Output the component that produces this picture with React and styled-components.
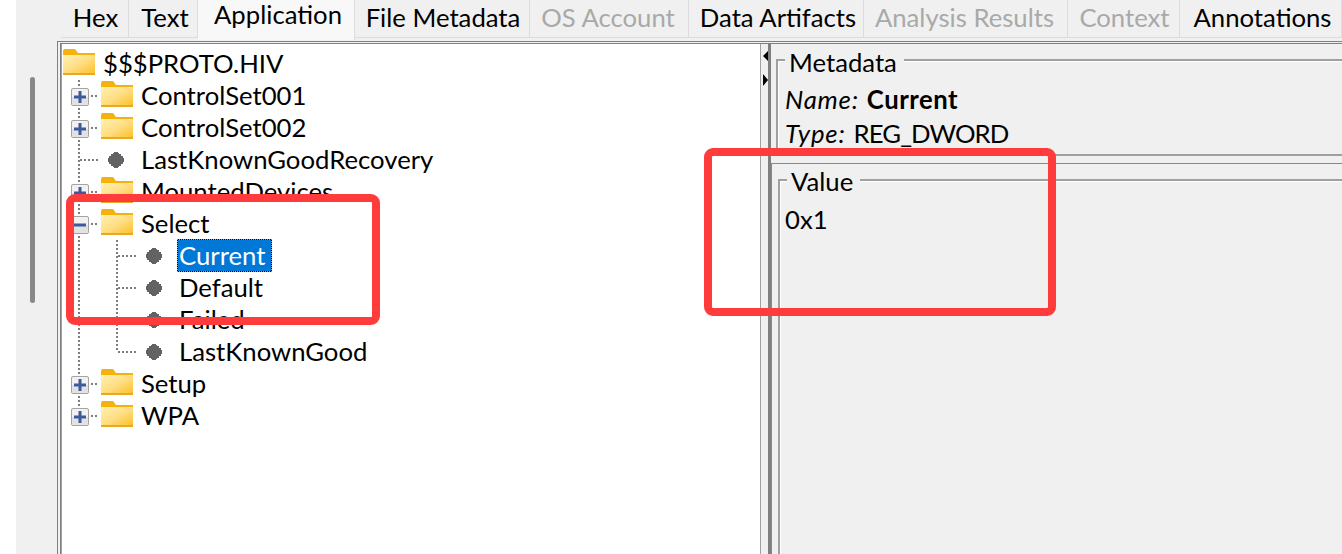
import React from "react";
import styled, { createGlobalStyle } from "styled-components";

const Global = createGlobalStyle`
  html, body { margin: 0; padding: 0; background: #fff; overflow: hidden; }
  body { font-family: Lato, "Open Sans", "Liberation Sans", sans-serif; color: #000; }
  * { box-sizing: border-box; }
`;

const Page = styled.div`
  position: relative; display: flex; width: 1342px; height: 554px; overflow: hidden; background: #fff;
  font-size: 25.7px;
`;
const Rail = styled.div`
  width: 41px; margin-left: 16px; flex: none; background: #f0f0f0; padding: 77px 0 0 14px;
`;
const Thumb = styled.div`
  width: 5px; height: 226px; background: #888; border-radius: 3px;
`;
const Main = styled.div`
  flex: 1; min-width: 0; display: flex; flex-direction: column; background: #f0f0f0;
`;
const TabStrip = styled.div`
  height: 41px; flex: none; display: flex; align-items: flex-start; padding-left: 4px;
`;
const Tab = styled.div`
  flex: none; width: ${p => p.$w}px; height: ${p => (p.$active ? 40 : 38)}px;
  display: flex; align-items: center; justify-content: center; white-space: nowrap;
  padding-bottom: ${p => (p.$active ? 13 : 3)}px;
  padding-left: ${p => Math.max(p.$n, 0) * 2}px;
  padding-right: ${p => Math.max(-p.$n, 0) * 2}px;
  background: ${p => (p.$active ? "#f8f8f8" : "#f0f0f0")};
  border-right: 1px solid #dcdcdc;
  border-bottom: ${p => (p.$active ? "none" : "1px solid #dcdcdc")};
  color: ${p => (p.$off ? "#a9a9a9" : "#000")};
`;
const Frame = styled.div`
  flex: 1; min-height: 0; border-top: 1px solid #808080; border-left: 1px solid #808080;
  padding: 1px 0 0 2px; display: flex;
`;
const Inner = styled.div`
  flex: 1; min-width: 0; display: flex; border-top: 1px solid #808080; border-left: 1px solid #808080;
`;
const TreePane = styled.div`
  width: 700px; flex: none; background: #fff; border-left: 1px solid #a0a0a0; border-right: 1px solid #a0a0a0;
  padding: 4px 0 0 1px; display: flex; flex-direction: column;
`;
const Row = styled.div`
  height: 32px; flex: none; display: flex; align-items: center;
`;
const Guides = styled.svg`
  flex: none; display: block;
`;
const FolderIcon = styled.svg`
  flex: none; display: block; margin-top: -4px;
`;
const BulletIcon = styled.svg`
  flex: none; display: block;
`;
const Label = styled.span`
  display: inline-flex; align-items: center; height: 31px; white-space: nowrap;
  padding: 0 ${p => (p.$selected ? 6 : 4)}px 2px 1px;
  margin-left: ${p => p.$gap}px; margin-top: -1px;
  ${p => p.$selected && `
    background: #0078d7; color: #fff;
    box-shadow: 0 0 0 1px #000; outline: 1px dotted #ff8c00;
  `}
`;
const Splitter = styled.div`
  width: 7px; flex: none; display: flex; flex-direction: column; padding: 7px 0 0 2px; gap: 13px;
`;
const Arrow = styled.svg`
  display: block; flex: none;
`;
const Details = styled.div`
  flex: 1; min-width: 0; display: flex; flex-direction: column; border-left: 3px solid #808080; overflow: hidden;
`;
const TopPane = styled.div`
  height: 112px; flex: none; padding-left: 5px; margin-right: -12px;
`;
const BottomPane = styled.div`
  flex: 1; margin-top: 7px; border-top: 1px solid #888; border-left: 1px solid #888;
  padding-left: 6px; margin-right: -12px;
`;
const Group = styled.fieldset`
  margin: 0; padding: 0 0 0 ${p => p.$pad}px; min-width: 0; height: ${p => p.$h};
  border: 2px solid #a0a0a0; box-shadow: inset 1px 1px 0 #fff;
`;
const Legend = styled.legend`
  margin-left: ${p => p.$m}px; padding: ${p => p.$drop}px 7px 0 ${p => p.$left}px;
  line-height: ${p => 32 - p.$drop}px; background: #f0f0f0;
`;
const MetaLine = styled.div`
  height: 34px; line-height: 32px; white-space: nowrap;
  &:first-of-type { margin-top: 7px; }
`;
const Key = styled.i`
  font-style: italic; margin-right: 8px; letter-spacing: .8px;
`;
const Strong = styled.b`
  font-weight: 700; letter-spacing: .5px;
`;
const TypeName = styled.span`
  letter-spacing: -.9px;
`;
const Mark = styled.div`
  position: absolute; border: 8px solid #ff3b3b; border-radius: 9px; pointer-events: none;
  left: ${p => p.$x}px; top: ${p => p.$y}px; width: ${p => p.$w}px; height: ${p => p.$h}px;
`;

const Dot = ({ d }) => (
  <path d={d} fill="none" stroke="#7c7c7c" strokeWidth="2" strokeDasharray="2 2" />
);

const Folder = () => (
  <FolderIcon width="32" height="26" viewBox="0 0 32 26">
    <defs>
      <linearGradient id="fold" x1="0" y1="0" x2="1" y2="1">
        <stop offset="0" stopColor="#fff0b5" />
        <stop offset=".5" stopColor="#ffdf85" />
        <stop offset="1" stopColor="#fcc02c" />
      </linearGradient>
    </defs>
    <path d="M0 2 L1 0 H12 L15 4 H32 V7 H0 Z" fill="#f4b20a" />
    <rect x="0" y="6" width="32" height="18" fill="url(#fold)" />
    <rect x="0" y="24" width="32" height="2" fill="#e6a921" />
  </FolderIcon>
);

const Bullet = () => (
  <BulletIcon width="16" height="16" viewBox="0 0 16 16">
    <path d="M5 1 H6 V0 H10 V1 H11 V2 H13 V4 H15 V6 H16 V10 H15 V12 H13 V14 H11 V15 H10 V16 H6 V15 H5 V14 H3 V12 H1 V10 H0 V6 H1 V4 H3 V2 H5 Z" fill="#636363" />
  </BulletIcon>
);

const Toggle = ({ open }) => (
  <g>
    <rect x="8.5" y="8.5" width="17" height="17" rx="1.5" fill="#f1f1f1" stroke="#a3a3a3" />
    <rect x="9" y="17" width="16" height="8" fill="#e2e2e2" />
    <rect x="11" y="15.5" width="12" height="3" fill="#3c5a9c" />
    {!open && <rect x="15.5" y="11" width="3" height="12" fill="#3c5a9c" />}
  </g>
);

const Branch = ({ toggle, open, last }) => (
  <Guides width="38" height="32" viewBox="0 0 38 32">
    <Dot d={`M16 0 V${last ? 8 : 32}`} />
    {toggle ? <Dot d="M28 16 H35" /> : <Dot d="M16 16 H35" />}
    {toggle && <Toggle open={open} />}
  </Guides>
);

const LeafOne = () => (
  <Guides width="45" height="32" viewBox="0 0 45 32">
    <Dot d="M16 0 V32" />
    <Dot d="M17 16 H36" />
  </Guides>
);

const LeafTwo = ({ last }) => (
  <Guides width="83" height="32" viewBox="0 0 83 32">
    <Dot d="M16 0 V32" />
    <Dot d={`M54 0 V${last ? 15 : 32}`} />
    <Dot d="M55 16 H74" />
  </Guides>
);

const tabs = [
  ["Hex", 68, 1], ["Text", 69, 2], ["Application", 157, 2, "active"], ["File Metadata", 175, 1],
  ["OS Account", 159, -1, "off"], ["Data Artifacts", 175, 2], ["Analysis Results", 204, -1, "off"],
  ["Context", 112, 1, "off"], ["Annotations", 162, 2],
];

export default function App() {
  return (
    <Page>
      <Global />
      <Rail><Thumb /></Rail>
      <Main>
        <TabStrip>
          {tabs.map(([name, w, n, s]) => (
            <Tab key={name} $w={w} $n={n} $active={s === "active"} $off={s === "off"}>{name}</Tab>
          ))}
        </TabStrip>
        <Frame>
          <Inner>
            <TreePane>
              <Row><Folder /><Label $gap={7}>$$$PROTO.HIV</Label></Row>
              <Row><Branch toggle /><Folder /><Label $gap={7}>ControlSet001</Label></Row>
              <Row><Branch toggle /><Folder /><Label $gap={7}>ControlSet002</Label></Row>
              <Row><LeafOne /><Bullet /><Label $gap={16}>LastKnownGoodRecovery</Label></Row>
              <Row><Branch toggle /><Folder /><Label $gap={7}>MountedDevices</Label></Row>
              <Row><Branch toggle open /><Folder /><Label $gap={7}>Select</Label></Row>
              <Row><LeafTwo /><Bullet /><Label $gap={16} $selected>Current</Label></Row>
              <Row><LeafTwo /><Bullet /><Label $gap={16}>Default</Label></Row>
              <Row><LeafTwo /><Bullet /><Label $gap={16}>Failed</Label></Row>
              <Row><LeafTwo last /><Bullet /><Label $gap={16}>LastKnownGood</Label></Row>
              <Row><Branch toggle /><Folder /><Label $gap={7}>Setup</Label></Row>
              <Row><Branch toggle last /><Folder /><Label $gap={7}>WPA</Label></Row>
            </TreePane>
            <Splitter>
              <Arrow width="5" height="10" viewBox="0 0 5 10"><path d="M5 0 V10 L0 5 Z" fill="#000" /></Arrow>
              <Arrow width="5" height="12" viewBox="0 0 5 12"><path d="M0 0 V12 L5 6 Z" fill="#000" /></Arrow>
            </Splitter>
            <Details>
              <TopPane>
                <Group $pad={7} $h="112px">
                  <Legend $m={0} $left={4} $drop={4}>Metadata</Legend>
                  <MetaLine><Key>Name:</Key><Strong>Current</Strong></MetaLine>
                  <MetaLine><Key>Type:</Key><TypeName>REG_DWORD</TypeName></MetaLine>
                </Group>
              </TopPane>
              <BottomPane>
                <Group $pad={5} $h="420px">
                  <Legend $m={2} $left={4} $drop={2}>Value</Legend>
                  <MetaLine>0x1</MetaLine>
                </Group>
              </BottomPane>
            </Details>
          </Inner>
        </Frame>
      </Main>
      <Mark $x={66} $y={194} $w={314} $h={131} />
      <Mark $x={704} $y={148} $w={352} $h={168} />
    </Page>
  );
}
